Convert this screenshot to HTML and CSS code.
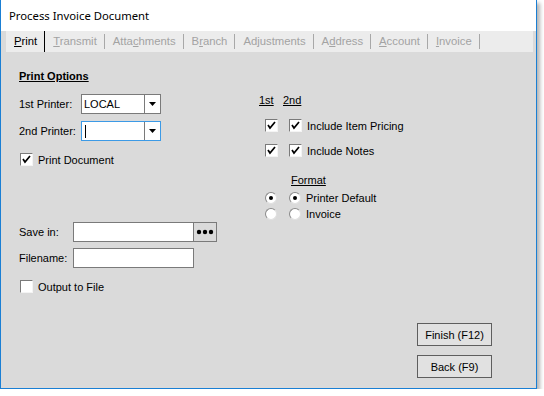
FILE: index.html
```html
<!DOCTYPE html>
<html>
    <head>
        <meta name="viewport" content="width=device-width, initial-scale=1">
        <link rel="stylesheet" href="styles.css">
    </head>
    <body>
        <div class="window">
            <div class="titlebar">Process Invoice Document</div>
            <div class="body">
                <div class="tabs">
                    <span class="tab active"><u>P</u>rint</span>
                    <span class="tab"><u>T</u>ransmit</span>
                    <span class="tab">Atta<u>c</u>hments</span>
                    <span class="tab">B<u>r</u>anch</span>
                    <span class="tab">Ad<u>j</u>ustments</span>
                    <span class="tab">A<u>d</u>dress</span>
                    <span class="tab"><u>A</u>ccount</span>
                    <span class="tab"><u>I</u>nvoice</span>
                </div>
                <div class="panel">
                    <div class="columns">
                        <div class="col-left">
                            <div class="heading">Print Options</div>

                            <div class="field first">
                                <span class="label">1st Printer:</span>
                                <div class="select">
                                    <span class="value">LOCAL</span>
                                    <span class="arrow"><svg width="7" height="4" viewBox="0 0 7 4"><polygon points="0,0 7,0 3.5,4" fill="#000"/></svg></span>
                                </div>
                            </div>
                            <div class="field second">
                                <span class="label">2nd Printer:</span>
                                <div class="select focused">
                                    <span class="value"><span class="caret"></span></span>
                                    <span class="arrow"><svg width="7" height="4" viewBox="0 0 7 4"><polygon points="0,0 7,0 3.5,4" fill="#000"/></svg></span>
                                </div>
                            </div>

                            <div class="check-row doc">
                                <span class="check"><svg width="11" height="11" viewBox="0 0 11 11"><polyline points="2,5 4,8 9,2" fill="none" stroke="#000" stroke-width="1.7"/></svg></span>
                                <span class="check-label">Print Document</span>
                            </div>

                            <div class="field save">
                                <span class="label short">Save in:</span>
                                <span class="input"></span>
                                <span class="browse"><svg width="18" height="6" viewBox="0 0 18 6"><circle cx="3" cy="3" r="2.2"/><circle cx="9" cy="3" r="2.2"/><circle cx="15" cy="3" r="2.2"/></svg></span>
                            </div>
                            <div class="field filename">
                                <span class="label short">Filename:</span>
                                <span class="input"></span>
                            </div>

                            <div class="check-row output">
                                <span class="check"></span>
                                <span class="check-label">Output to File</span>
                            </div>
                        </div>

                        <div class="col-right">
                            <div class="col-head">
                                <span>1st</span>
                                <span>2nd</span>
                            </div>
                            <div class="opt-row">
                                <span class="check"><svg width="11" height="11" viewBox="0 0 11 11"><polyline points="2,5 4,8 9,2" fill="none" stroke="#000" stroke-width="1.7"/></svg></span>
                                <span class="check second-box"><svg width="11" height="11" viewBox="0 0 11 11"><polyline points="2,5 4,8 9,2" fill="none" stroke="#000" stroke-width="1.7"/></svg></span>
                                <span class="check-label">Include Item Pricing</span>
                            </div>
                            <div class="opt-row">
                                <span class="check"><svg width="11" height="11" viewBox="0 0 11 11"><polyline points="2,5 4,8 9,2" fill="none" stroke="#000" stroke-width="1.7"/></svg></span>
                                <span class="check second-box"><svg width="11" height="11" viewBox="0 0 11 11"><polyline points="2,5 4,8 9,2" fill="none" stroke="#000" stroke-width="1.7"/></svg></span>
                                <span class="check-label">Include Notes</span>
                            </div>

                            <div class="format-title">Format</div>
                            <div class="radio-row">
                                <span class="radio on"></span>
                                <span class="radio on second-box"></span>
                                <span class="radio-label">Printer Default</span>
                            </div>
                            <div class="radio-row next">
                                <span class="radio"></span>
                                <span class="radio second-box"></span>
                                <span class="radio-label">Invoice</span>
                            </div>
                        </div>
                    </div>

                    <div class="actions">
                        <button class="btn">Finish (F12)</button>
                        <button class="btn">Back (F9)</button>
                    </div>
                </div>
            </div>
        </div>
    </body>
</html>
```

FILE: styles.css
```css
body {
margin: 0;
background: #ffffff;
font-family: "Liberation Sans", Arial, sans-serif;
font-size: 11px;
color: #000000;
}

.window {
width: 535px;
height: 388px;
border: 1px solid #1a7fd4;
border-top: none;
box-shadow: 3px 3px 4px rgba(0, 0, 0, 0.3);
display: flex;
flex-direction: column;
}

.titlebar {
height: 31px;
line-height: 31px;
padding-left: 8px;
background: #ffffff;
font-family: "Noto Sans", "Liberation Sans", sans-serif;
font-size: 11.3px;
}

.body {
flex: 1;
background: #dadada;
display: flex;
flex-direction: column;
}

/* tab strip */
.tabs {
height: 21px;
margin: 0 3px 0 5px;
background: #ececec;
display: flex;
align-items: center;
font-size: 11.3px;
}
.tab {
padding: 0 7px 0 8px;
line-height: 15px;
color: #a3a3a3;
border-right: 1px solid #a8a8a8;
}
.tab.active {
align-self: stretch;
line-height: 21px;
color: #000000;
border-right-color: #000000;
}

.panel {
flex: 1;
display: flex;
flex-direction: column;
padding: 18px 0 0 18px;
}
.columns {
display: flex;
}
.col-left {
width: 240px;
}
.col-right {
padding-top: 24px;
}

.heading {
font-weight: bold;
text-decoration: underline;
line-height: 13px;
}

/* label + control rows */
.field {
display: flex;
align-items: center;
height: 20px;
}
.field.first { margin-top: 11px; }
.field.second { margin-top: 7px; }
.field.save { margin-top: 56px; }
.field.filename { margin-top: 6px; }
.label {
width: 62px;
}
.label.short {
width: 54px;
}

.select {
width: 80px;
height: 20px;
box-sizing: border-box;
border: 1px solid #7a7a7a;
background: #ffffff;
display: flex;
}
.select.focused {
border-color: #3c9ae6;
}
.select .value {
flex: 1;
padding-left: 2px;
line-height: 18px;
display: flex;
align-items: center;
}
.select .arrow {
width: 15px;
border-left: 1px solid #7a7a7a;
display: flex;
align-items: center;
justify-content: center;
}
.caret {
width: 1px;
height: 13px;
background: #000000;
margin-left: 1px;
}

.input {
width: 121px;
height: 20px;
box-sizing: border-box;
border: 1px solid #7a7a7a;
background: #ffffff;
}
.browse {
width: 24px;
height: 20px;
box-sizing: border-box;
margin-left: -1px;
border: 1px solid #7a7a7a;
display: flex;
align-items: center;
justify-content: center;
}

/* checkboxes and radios */
.check {
width: 13px;
height: 13px;
box-sizing: border-box;
background: #ffffff;
border-top: 1px solid #7a7a7a;
border-left: 1px solid #7a7a7a;
border-right: 1px solid #f4f4f4;
border-bottom: 1px solid #f4f4f4;
display: flex;
}
.check-row {
display: flex;
align-items: center;
height: 13px;
padding-left: 1px;
}
.check-row.doc { margin-top: 12px; }
.check-row.output { margin-top: 12px; }
.check-label {
margin-left: 5px;
}

.col-head {
display: flex;
line-height: 13px;
}
.col-head span {
width: 24px;
text-decoration: underline;
}
.opt-row {
display: flex;
align-items: center;
height: 13px;
margin-top: 12px;
padding-left: 6px;
}
.second-box {
margin-left: 11px;
}

.format-title {
margin-top: 17px;
padding-left: 32px;
line-height: 13px;
text-decoration: underline;
}
.radio-row {
display: flex;
align-items: center;
height: 13px;
margin-top: 4px;
padding-left: 6px;
}
.radio-row.next {
margin-top: 3px;
}
.radio {
width: 12px;
height: 12px;
box-sizing: border-box;
border-radius: 50%;
background: #ffffff;
border: 1px solid #8a8a8a;
border-right-color: #e0e0e0;
border-bottom-color: #e0e0e0;
display: flex;
align-items: center;
justify-content: center;
}
.radio.second-box {
margin-left: 12px;
}
.radio.on::after {
content: "";
width: 4px;
height: 4px;
border-radius: 50%;
background: #000000;
}
.radio-label {
margin-left: 5px;
}

/* bottom right buttons */
.actions {
margin-top: auto;
align-self: flex-end;
display: flex;
flex-direction: column;
gap: 9px;
padding: 0 44px 10px 0;
}
.btn {
width: 75px;
height: 23px;
border: 1px solid #5e5e5e;
background: #e1e1e1;
font-family: "Liberation Sans", Arial, sans-serif;
font-size: 11px;
color: #000000;
padding: 0;
}
```
